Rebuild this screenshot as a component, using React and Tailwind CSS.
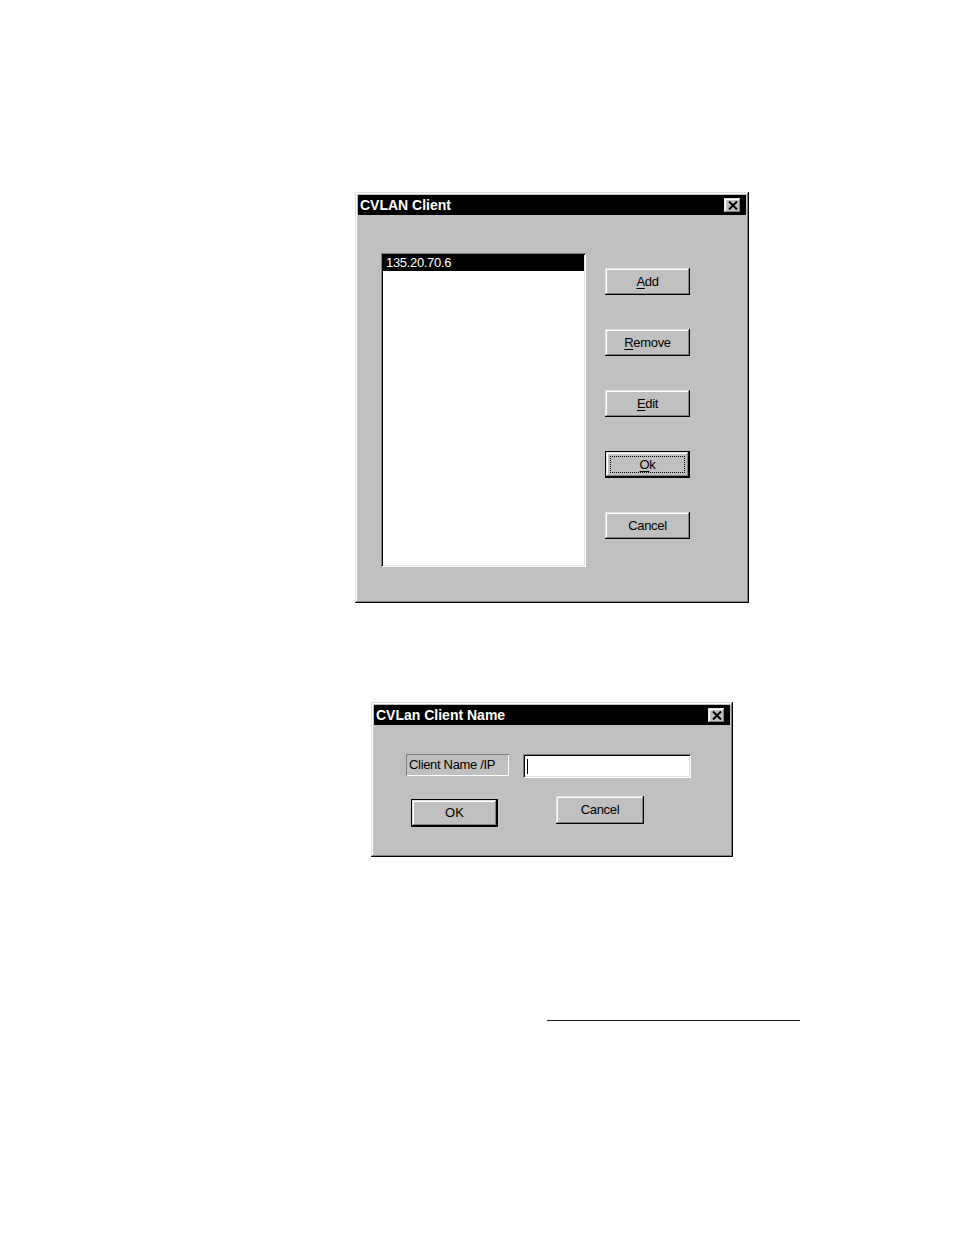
const raised = 'bg-[#c0c0c0] shadow-[inset_-1px_-1px_#000,inset_1px_1px_#dfdfdf,inset_-2px_-2px_#808080,inset_2px_2px_#fff]';
const sunken = 'shadow-[inset_1px_1px_#808080,inset_-1px_-1px_#fff,inset_2px_2px_#000,inset_-2px_-2px_#dfdfdf]';
const font = { fontFamily: '"Liberation Sans", Arial, sans-serif' };

function CloseBox() {
  return (
    <div className={`${raised} w-[17px] h-[15px] flex items-center justify-center`}>
      <svg width="10" height="9" viewBox="0 0 10 9">
        <path d="M1 0.5 L9 8.5 M9 0.5 L1 8.5" stroke="#000" strokeWidth="2" />
      </svg>
    </div>
  );
}

function TitleBar({ title }) {
  return (
    <div className="bg-black h-[20px] mx-[3px] mt-[3px] flex items-center justify-between pl-[2px] pr-[5px]">
      <span className="text-white font-bold text-[14px] leading-none">{title}</span>
      <CloseBox />
    </div>
  );
}

function Btn({ children, def = false, className = '' }) {
  if (def) {
    return (
      <div className={`border border-black ${className}`}>
        <div className={`${raised} w-full h-full flex items-center justify-center p-[4px]`}>
          <div className="w-full h-full border border-dotted border-black flex items-center justify-center text-[13px] text-black tracking-tight">
            {children}
          </div>
        </div>
      </div>
    );
  }
  return (
    <div className={`${raised} flex items-center justify-center text-[13px] text-black tracking-tight ${className}`}>
      {children}
    </div>
  );
}

function U({ children }) {
  return <span className="underline underline-offset-2">{children}</span>;
}

export default function App() {
  return (
    <div className="w-[954px] h-[1235px] bg-white flex flex-col" style={font}>
      <div className={`${raised} ml-[355px] mt-[192px] w-[394px] h-[411px] flex flex-col`}>
        <TitleBar title="CVLAN Client" />
        <div className="flex pl-[26px] pt-[38px]">
          <div className={`${sunken} bg-white w-[205px] h-[314px] p-[2px]`}>
            <div className="bg-black text-white text-[13px] h-[16px] leading-[16px] pl-[3px] tracking-tight">135.20.70.6</div>
          </div>
          <div className="flex flex-col ml-[19px] mt-[15px] gap-[34px]">
            <Btn className="w-[85px] h-[27px]"><U>A</U>dd</Btn>
            <Btn className="w-[85px] h-[27px]"><U>R</U>emove</Btn>
            <Btn className="w-[85px] h-[27px]"><U>E</U>dit</Btn>
            <Btn def className="w-[85px] h-[27px]"><U>O</U>k</Btn>
            <Btn className="w-[85px] h-[27px]">Cancel</Btn>
          </div>
        </div>
      </div>

      <div className={`${raised} ml-[371px] mt-[99px] w-[362px] h-[155px] flex flex-col`}>
        <TitleBar title="CVLan Client Name" />
        <div className="flex items-start pl-[35px] pt-[29px]">
          <div className="w-[103px] h-[22px] shadow-[inset_1px_1px_#808080,inset_-1px_-1px_#fff] flex items-center pl-[3px] text-[13px] text-black tracking-tight">
            Client Name /IP
          </div>
          <div className={`${sunken} bg-white ml-[14px] w-[168px] h-[24px] flex items-center pl-[4px]`}>
            <div className="w-px h-[15px] bg-black" />
          </div>
        </div>
        <div className="flex items-start pl-[40px] pt-[18px]">
          <div className="mt-[3px] border border-black w-[87px] h-[28px]">
            <div className={`${raised} w-full h-full flex items-center justify-center text-[13px] text-black`}>OK</div>
          </div>
          <Btn className="ml-[58px] w-[88px] h-[28px]">Cancel</Btn>
        </div>
      </div>

      <div className="ml-[547px] mt-[163px] w-[253px] h-px bg-[#1a1a1a]" />
    </div>
  );
}
